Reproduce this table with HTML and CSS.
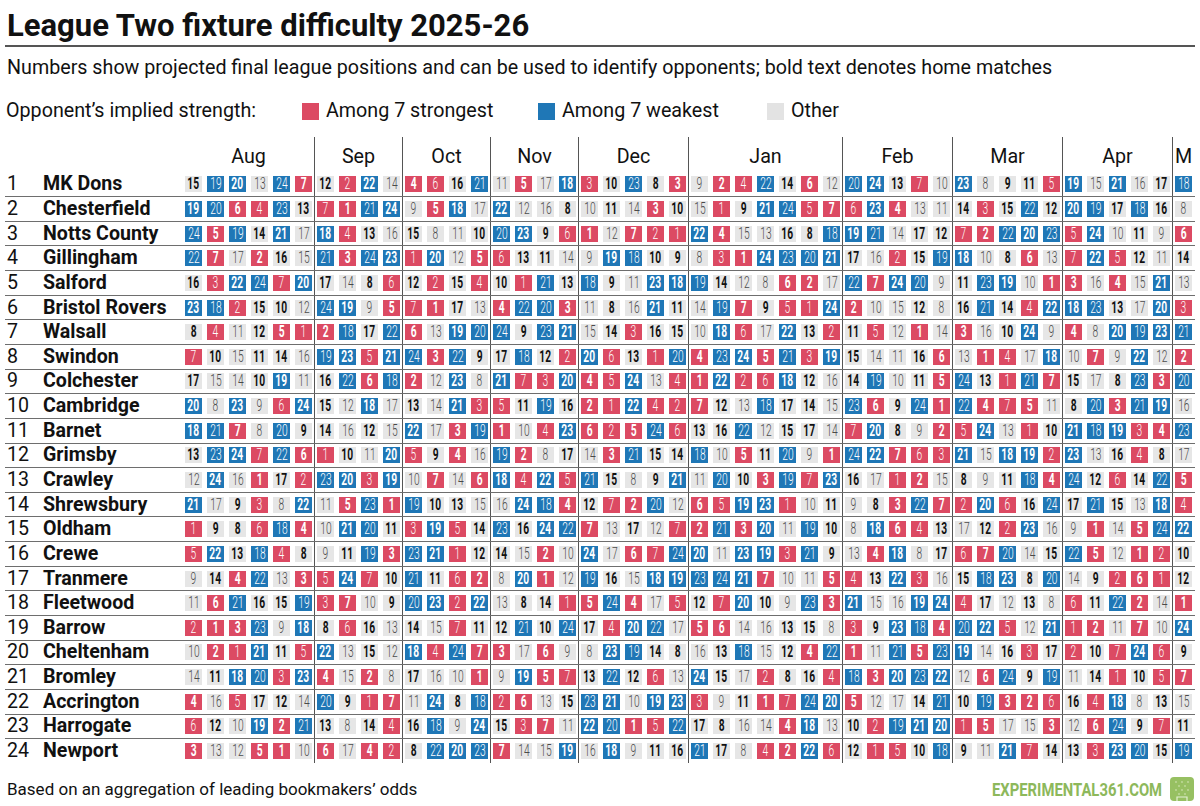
FILE: index.html
```html
<!DOCTYPE html>
<html lang="en">
<head>
<meta charset="utf-8">
<title>League Two fixture difficulty 2025-26</title>
<link rel="stylesheet" href="styles.css">
</head>
<body>
<div class="page">
  <h1 class="title">League Two fixture difficulty 2025-26</h1>
  <p class="subtitle">Numbers show projected final league positions and can be used to identify opponents; bold text denotes home matches</p>
  <div class="legend">
    <span class="legend-label">Opponent’s implied strength:</span>
    <span class="legend-item item-strong"><i class="swatch str"></i><span>Among 7 strongest</span></span>
    <span class="legend-item item-weak"><i class="swatch wk"></i><span>Among 7 weakest</span></span>
    <span class="legend-item"><i class="swatch oth"></i><span>Other</span></span>
  </div>
  <div class="chart" id="chart">
    <div class="months" id="months">
      <div class="lead"></div>
    </div>
  </div>
  <div class="footer">
    <span class="source">Based on an aggregation of leading bookmakers’ odds</span>
    <span class="brand">
      <span class="brand-text">EXPERIMENTAL361.COM</span>
      <svg class="brand-icon" width="24" height="24" viewBox="0 0 24 24" aria-hidden="true">
        <rect x="0" y="0" width="24" height="24" rx="4" fill="#97c062"/>
        <g fill="#c3dca0">
          <circle cx="6" cy="5" r="0.9"/><circle cx="12" cy="5" r="0.9"/><circle cx="18" cy="5" r="0.9"/>
          <circle cx="9" cy="9" r="0.9"/><circle cx="15" cy="9" r="0.9"/>
          <circle cx="6" cy="13" r="0.9"/><circle cx="12" cy="13" r="0.9"/><circle cx="18" cy="13" r="0.9"/>
          <circle cx="9" cy="17" r="0.9"/><circle cx="15" cy="17" r="0.9"/>
        </g>
        <path d="M7 24 V20 H17 V24" fill="none" stroke="#e4efd3" stroke-width="1.2"/>
      </svg>
    </span>
  </div>
</div>
<script src="script.js"></script>
</body>
</html>
```

FILE: styles.css
```css
* { box-sizing: border-box; }

html, body {
  margin: 0;
  padding: 0;
  background: #ffffff;
}

body {
  width: 1200px;
  height: 806px;
  overflow: hidden;
  font-family: Roboto, "Liberation Sans", Arial, sans-serif;
  color: #111111;
}

.page {
  padding: 0 5px;
}

.title {
  margin: 0;
  padding: 9px 2px 2px;
  font-size: 31px;
  line-height: 34px;
  font-weight: 700;
  color: #111;
  border-bottom: 2px solid #555;
  white-space: nowrap;
}

.subtitle {
  margin: 0;
  padding: 10px 2px 0;
  font-size: 19.7px;
  line-height: 22px;
  color: #111;
  white-space: nowrap;
}

.legend {
  display: flex;
  align-items: center;
  height: 22px;
  margin-top: 21px;
  font-size: 19.7px;
  line-height: 22px;
  color: #111;
  white-space: nowrap;
}

.legend-label {
  width: 297px;
  padding-left: 1px;
}

.legend-item {
  display: flex;
  align-items: center;
  gap: 7px;
}

.item-strong { width: 236px; }
.item-weak { width: 229px; }

.swatch {
  display: block;
  width: 17px;
  height: 17px;
}

.swatch.str { background: #dc4a63; }
.swatch.wk { background: #1f77b6; }
.swatch.oth { background: #e3e3e3; }

.chart {
  margin-top: 15px;
  width: 1190px;
}

.months {
  display: flex;
  height: 35.5px;
  align-items: stretch;
}

.lead {
  width: 180px;
  flex: none;
}

.grp {
  box-sizing: content-box;
  display: flex;
  gap: 5px;
  flex: none;
}

.grp + .grp {
  margin-left: 2px;
  padding-left: 2px;
  border-left: 1px solid #555;
}

.n1 { width: 17px; }
.n4 { width: 83px; }
.n5 { width: 105px; }
.n6 { width: 127px; }
.n7 { width: 149px; }

.mlabel {
  justify-content: center;
  align-items: flex-end;
  padding-bottom: 5px;
  font-size: 19.7px;
  line-height: 22px;
  color: #111;
}

.row {
  display: flex;
  height: 24.65px;
  align-items: stretch;
  border-bottom: 1px solid #6e6e6e;
}

.row:last-child {
  border-bottom-color: transparent;
}

.row .lead {
  display: flex;
  align-items: center;
  font-size: 19.6px;
  line-height: 22px;
  white-space: nowrap;
}

.pos {
  width: 38px;
  padding-left: 2px;
  flex: none;
}

.team {
  font-weight: 700;
}

.row .grp {
  align-items: center;
}

.cell {
  width: 17px;
  height: 16px;
  flex: none;
  display: flex;
  align-items: center;
  justify-content: center;
  font-size: 16px;
  line-height: 16px;
  font-weight: 300;
  color: #4a4a4a;
  background: #e6e6e6;
}

.cell .v {
  display: inline-block;
  transform: scaleX(0.64);
}

.cell.home {
  font-weight: 700;
  color: #111;
}

.cell.str {
  background: #dc4a63;
  color: #fff;
}

.cell.wk {
  background: #1f77b6;
  color: #fff;
}

.footer {
  display: flex;
  justify-content: space-between;
  align-items: center;
  height: 42px;
  padding-top: 9px;
}

.source {
  padding-left: 2px;
  font-size: 17px;
  line-height: 20px;
  color: #111;
}

.brand {
  display: flex;
  align-items: center;
  gap: 8px;
  padding-right: 1px;
}

.brand-text {
  display: inline-block;
  font-size: 19px;
  font-weight: 700;
  color: #8db85b;
  transform: scaleX(0.78);
  transform-origin: right center;
  margin-left: -50px;
}

.brand-icon {
  display: block;
}
```

FILE: script.js
```js
(function () {
  var months = [["Aug", 6], ["Sep", 4], ["Oct", 4], ["Nov", 4], ["Dec", 5], ["Jan", 7], ["Feb", 5], ["Mar", 5], ["Apr", 5], ["M", 1]];
  var teams = [
    ["MK Dons", "15b 19 20b 13 24 7b|12b 2 22b 14|4b 6 16b 21|11 5b 17 18b|3 10b 23 8b 3b|9 2b 4 22 14b 6b 12|20 24b 13b 7 10|23b 8 9b 11b 5|19b 15 21b 16 17b|18"],
    ["Chesterfield", "19b 20 6b 4 23 13b|7 1b 21 24b|9 5b 18b 17|22b 12 16 8b|10 11b 14 3b 10b|15 1 9b 21b 24 5 7b|6 23b 4b 13 11|14b 3 15b 22 12b|20b 19 17b 18 16b|8"],
    ["Notts County", "24 5b 19 14b 21b 17|18b 4 13b 16|15b 8 11 10b|20 23b 9b 6|1b 12 7b 2 1|22b 4b 15 13 16b 8b 18|19b 21 14 17b 12b|7 2b 22 20b 23|5 24b 10 11b 9|6b"],
    ["Gillingham", "22 7b 17 2b 16b 15|21 3b 24 23b|1 20b 12 5b|6 13b 11b 14|9 19b 18 10b 9b|8 3 1b 24b 23 20 21b|17b 16 2 15b 19|18b 10 8b 6b 13|7 22b 5 12b 11|14b"],
    ["Salford", "16b 3 22b 24 7 20b|17b 14 8b 6|12b 2 15b 4|10b 1 21 13b|18 9b 11 23b 18b|19 14b 12 8 6b 2b 17|22 7b 24b 20 9|11b 23 19b 10 1b|3b 16 4b 15 21b|13"],
    ["Bristol Rovers", "23b 18 2 15b 10b 12|24 19b 9 5b|7 1b 17b 13|4b 22 20 3b|11 8b 16 21b 11b|14 19 7b 9b 5 1 24b|2b 10 15 12b 8|16b 21 14b 4 22b|18b 23 13b 17 20b|3"],
    ["Walsall", "8b 4 11 12b 5b 1|2b 18 17b 22|6b 13 19b 20|24 9b 23 21b|15 14b 3 16b 15b|10 18b 6 17 22b 13b 2|11b 5 12 1b 14|3b 16 10b 24b 9|4b 8 20b 19 23b|21"],
    ["Swindon", "7 10b 15 11b 14b 16|19 23b 5 21b|24 3b 22 9b|17b 18 12b 2|20b 6 13b 1 20|4b 23 24b 5b 21 3 19b|15b 14 11 16b 6b|13 1b 4 17 18b|10 7b 9 22b 12|2b"],
    ["Colchester", "17b 15 14 10b 19b 11|16b 22 6b 18|2b 12 23b 8|21b 7 3 20b|4b 5 24b 13 4|1b 22b 2 6 18b 12b 16|14b 19 10 11b 5b|24 13b 1 21 7b|15b 17 8b 23 3b|20"],
    ["Cambridge", "20b 8 23b 9 6 24b|15b 12 18b 17|13b 14 21b 3|5 11b 19 16b|2b 1 22b 4 2|7b 12b 13 18 17b 14b 15|23 6b 9b 24 1b|22 4b 7 5b 11|8b 20 3b 21 19b|16"],
    ["Barnet", "18b 21 7b 8 20 9b|14b 16 12b 15|22b 17 3b 19|1b 10 4 23b|6b 2 5b 24 6|13b 16b 22 12 15b 17b 14|7 20b 8b 9 2b|5 24b 13 1 10b|21b 18 19b 3 4b|23"],
    ["Grimsby", "13b 23 24b 7 22 6b|1 10b 11 20b|5 9b 4b 16|19 2b 8 17b|14 3b 21 15b 14b|18 10 5b 11b 20 9 1b|24 22b 7b 6 3|21b 15 18b 19b 2|23b 13 16b 4 8b|17"],
    ["Crawley", "12 24b 16 1b 17b 2|23 20b 3 19b|10 7b 14 6b|18b 4 22b 5|21 15b 8 9b 21b|11 20 10b 3b 19 7 23b|16b 17 1 2b 15|8b 9 11b 18 4b|24 12b 6 14b 22|5b"],
    ["Shrewsbury", "21b 17 9b 3 8 22b|11 5b 23 1b|19 10b 13b 15|16 24b 18 4b|12b 7 2b 20 12|6b 5 19b 23b 1 10 11b|9 8b 3b 22 7b|2 20b 6 16b 24|17b 21 15b 13 18b|4"],
    ["Oldham", "1 9b 8b 6 18 4b|10 21b 20 11b|3 19b 5 14b|23 16b 24b 22|7b 13 17b 12 7|2b 21 3b 20b 11 19 10b|8 18b 6b 4 13b|17 12b 2 23b 16|9 1b 14 5b 24|22b"],
    ["Crewe", "5 22b 13b 18 4 8b|9 11b 19 3b|23 21b 1 12b|14b 15 2b 10|24b 17 6b 7 24|20b 11 23b 19b 3 21 9b|13 4b 18b 8 17b|6 7b 20 14 15b|22 5b 12 1b 2|10b"],
    ["Tranmere", "9 14b 4b 22 13 3b|5 24b 7 10b|21 11b 6 2b|8 20b 1b 12|19 16b 15 18b 19b|23 24 21b 7b 10 11 5b|4 13b 22b 3 16|15b 18 23b 8b 20|14 9b 2 6b 1|12b"],
    ["Fleetwood", "11 6b 21 16b 15b 19|3 7b 10 9b|20 23b 2 22b|13 8b 14b 1|5b 24 4b 17 5|12b 7 20b 10b 9 23 3b|21b 15 16 19b 24b|4 17b 12 13b 8|6 11b 22 2b 14|1b"],
    ["Barrow", "2 1b 3b 23 9 18b|8b 6 16b 13|14b 15 7 11b|12b 21 10b 24|17b 4 20b 22 17|5b 6b 14 16 13b 15b 8|3 9b 23b 18 4b|20 22b 5 12 21b|1 2b 11 7b 10|24b"],
    ["Cheltenham", "10 2b 1 21b 11b 5|22b 13 15b 12|18b 4 24 7b|3b 17 6b 9|8 23b 19 14b 8b|16 13b 18 15 12b 4b 22|1b 11 21 5b 23|19b 14 16b 3 17b|2 10b 7 24b 6|9b"],
    ["Bromley", "14 11b 18b 20 3 23b|4b 15 2b 8|17b 16 10 1b|9 19b 5b 7|13b 22 12b 6 13|24b 15b 17 2 8b 16b 4|18 3b 20b 23 22b|12 6b 24 9b 19|11 14b 1 10b 5|7b"],
    ["Accrington", "4b 16 5 17b 12b 14|20 9b 1 7b|11 24b 8b 18|2 6b 13 15b|23 21b 10 19b 23b|3 9 11b 1b 7 24 20b|5b 12 17 14b 21|10b 19 3b 2b 6|16b 4 18b 8 13b|15"],
    ["Harrogate", "6 12b 10 19b 2b 21|13b 8 14b 4|16b 18 9 24b|15b 3 7b 11|22b 20 1b 5 22|17b 8b 16 14 4b 18b 13|10b 2 19 21b 20b|1 5b 17 15 3b|12 6b 24 9b 7|11b"],
    ["Newport", "3b 13 12 5b 1b 10|6b 17 4b 2|8b 22 20b 23|7b 14 15 19b|16 18b 9 11b 16b|21 17b 8 4 2b 22b 6|12b 1 5 10b 18|9b 11 21b 7 14b|13b 3 23b 20 15b|19"]
  ];

  var chart = document.getElementById("chart");
  var head = document.getElementById("months");

  months.forEach(function (m) {
    var g = document.createElement("div");
    g.className = "grp mlabel n" + m[1];
    g.textContent = m[0];
    head.appendChild(g);
  });

  teams.forEach(function (t, i) {
    var row = document.createElement("div");
    row.className = "row";
    var lead = document.createElement("div");
    lead.className = "lead";
    var pos = document.createElement("span");
    pos.className = "pos";
    pos.textContent = String(i + 1);
    var name = document.createElement("span");
    name.className = "team";
    name.textContent = t[0];
    lead.appendChild(pos);
    lead.appendChild(name);
    row.appendChild(lead);

    t[1].split("|").forEach(function (grp) {
      var vals = grp.trim().split(/\s+/);
      var g = document.createElement("div");
      g.className = "grp n" + vals.length;
      vals.forEach(function (v) {
        var home = v.charAt(v.length - 1) === "b";
        var n = parseInt(v, 10);
        var c = document.createElement("span");
        var cls = "cell";
        if (n <= 7) cls += " str";
        else if (n >= 18) cls += " wk";
        if (home) cls += " home";
        c.className = cls;
        var inner = document.createElement("span");
        inner.className = "v";
        inner.textContent = String(n);
        c.appendChild(inner);
        g.appendChild(c);
      });
      row.appendChild(g);
    });
    chart.appendChild(row);
  });
})();
```
